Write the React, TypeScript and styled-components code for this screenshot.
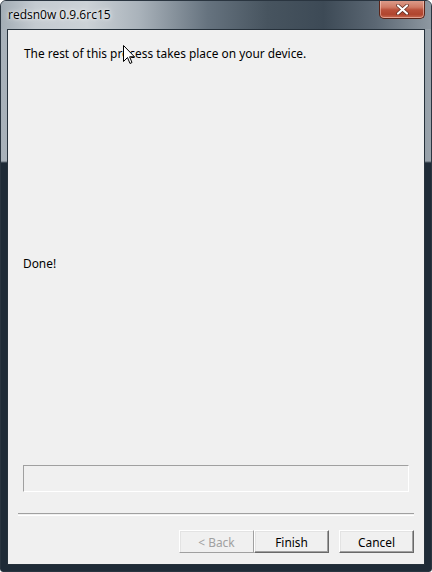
import React from "react";
import styled, { createGlobalStyle } from "styled-components";

const Global = createGlobalStyle`
  html, body { margin: 0; padding: 0; background: #ffffff; }
  #root { width: 432px; height: 572px; }
`;

const Frame = styled.div`
  position: relative;
  width: 432px;
  height: 572px;
  box-sizing: border-box;
  display: flex;
  flex-direction: column;
  border: 1px solid #2a3540;
  border-radius: 6px 6px 3px 3px;
  overflow: hidden;
  background:
    linear-gradient(to bottom, rgba(0,0,0,0) 0px, rgba(0,0,0,0) 160px, #1f2b37 162px, #1f2b37 100%),
    linear-gradient(to right, #a8b1b9 0%, #b6bec5 30%, #5f6c78 55%, #4a5764 75%, #9aa4ac 100%);
`;

const TitleBar = styled.div`
  height: 28px;
  flex: none;
  display: flex;
  align-items: flex-start;
  justify-content: space-between;
  padding-left: 7px;
  background: linear-gradient(
    to right,
    #a3adb5 0%,
    #c4cbd1 8%,
    #ccd2d7 20%,
    #aab3bb 32%,
    #66737f 48%,
    #47545f 62%,
    #3d4a56 75%,
    #5b6773 87%,
    #8e98a1 100%
  );
`;

const Title = styled.span`
  margin-top: 6px;
  font-family: "Open Sans", "Noto Sans", sans-serif;
  font-size: 12px;
  line-height: 16px;
  color: #000000;
  text-shadow: 0 0 6px rgba(255,255,255,0.9), 0 0 3px rgba(255,255,255,0.9);
`;

const CloseButton = styled.div`
  width: 46px;
  height: 19px;
  margin-right: 6px;
  margin-top: -1px;
  box-sizing: border-box;
  border: 1px solid #5a2418;
  border-top: none;
  border-radius: 0 0 5px 5px;
  background: linear-gradient(to bottom, #dea08f 0%, #cf7a64 40%, #b9503a 55%, #b0452e 80%, #c86a52 100%);
  box-shadow: inset 0 0 0 1px rgba(255,220,210,0.5);
  display: flex;
  align-items: center;
  justify-content: center;
`;

const Body = styled.div`
  flex: 1;
  display: flex;
  padding: 0 6px 6px 6px;
`;

const Client = styled.div`
  flex: 1;
  box-sizing: border-box;
  border: 1px solid #26313b;
  background: #f0f0f0;
  display: flex;
  flex-direction: column;
  padding: 16px 10px 11px 10px;
  font-family: "Noto Sans", "Liberation Sans", sans-serif;
  font-size: 11.9px;
  color: #000000;
`;

const Message = styled.div<{ $indent: number }>`
  padding-left: ${(p) => p.$indent}px;
  line-height: 14px;
`;

const Spacer = styled.div<{ $h: number }>`
  height: ${(p) => p.$h}px;
  flex: none;
`;

const Progress = styled.div`
  margin: 0 5px 0 5px;
  height: 27px;
  box-sizing: border-box;
  border-top: 1px solid #a0a0a0;
  border-left: 1px solid #a0a0a0;
  border-bottom: 1px solid #ffffff;
  border-right: 1px solid #ffffff;
`;

const Separator = styled.div`
  height: 1px;
  border-top: 1px solid #a0a0a0;
  border-bottom: 1px solid #ffffff;
`;

const ButtonRow = styled.div`
  display: flex;
  justify-content: flex-end;
`;

const Button = styled.button<{ $gap?: number; $default?: boolean }>`
  width: 75px;
  height: 23px;
  margin-left: ${(p) => p.$gap ?? 0}px;
  padding: 0;
  box-sizing: border-box;
  background: #f0f0f0;
  font-family: "Noto Sans", "Liberation Sans", sans-serif;
  font-size: 11.9px;
  line-height: 14px;
  color: ${(p) => (p.disabled ? "#a0a0a0" : "#000000")};
  border-style: solid;
  border-width: 1px;
  border-color: #ffffff #696969 #696969 #ffffff;
  box-shadow: inset -1px -1px 0 #a0a0a0, inset 1px 1px 0 #e3e3e3;
  ${(p) =>
    p.disabled
      ? "border-color: #ffffff #a0a0a0 #a0a0a0 #ffffff; box-shadow: inset 1px 1px 0 #e3e3e3;"
      : ""}
`;

const Cursor = styled.svg`
  position: absolute;
  left: 122px;
  top: 44px;
`;

export default function App() {
  return (
    <>
      <Global />
      <Frame>
        <TitleBar>
          <Title>redsn0w 0.9.6rc15</Title>
          <CloseButton>
            <svg width="13" height="11" viewBox="0 0 13 11">
              <path
                d="M2 1.5 L11 9.5 M11 1.5 L2 9.5"
                stroke="#5a2a20"
                strokeWidth="3.6"
                strokeLinecap="round"
              />
              <path
                d="M2 1.5 L11 9.5 M11 1.5 L2 9.5"
                stroke="#ffffff"
                strokeWidth="2.2"
                strokeLinecap="round"
              />
            </svg>
          </CloseButton>
        </TitleBar>
        <Body>
          <Client>
            <Message $indent={6}>The rest of this process takes place on your device.</Message>
            <Spacer $h={196} />
            <Message $indent={5}>Done!</Message>
            <Spacer $h={195} />
            <Progress />
            <Spacer $h={21} />
            <Separator />
            <Spacer $h={14} />
            <ButtonRow>
              <Button disabled>&lt; Back</Button>
              <Button $default>Finish</Button>
              <Button $gap={10}>Cancel</Button>
            </ButtonRow>
          </Client>
        </Body>
        <Cursor width="12" height="20" viewBox="0 0 12 20">
          <path
            d="M0.5 0.5 L0.5 16.5 L4.5 12.5 L7 18.5 L9 17.5 L6.6 11.8 L11.5 11.8 Z"
            fill="#ffffff"
            stroke="#000000"
            strokeWidth="1"
          />
        </Cursor>
      </Frame>
    </>
  );
}
